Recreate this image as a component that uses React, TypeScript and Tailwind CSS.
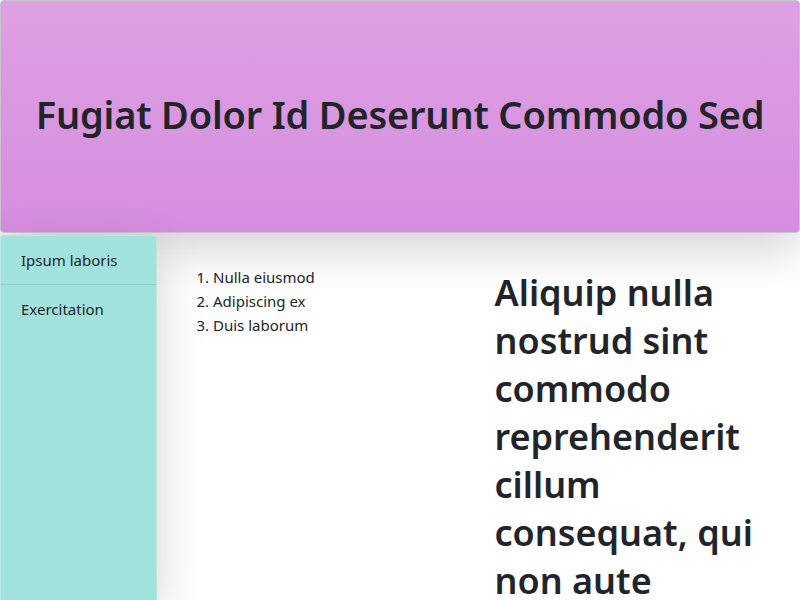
export default function App() {
  const links = ["Ipsum laboris", "Exercitation"];
  const items = ["Nulla eiusmod", "Adipiscing ex", "Duis laborum"];

  return (
    <div
      className="flex h-[600px] w-[800px] flex-col overflow-hidden bg-white text-[#212529]"
      style={{ fontFamily: '"Noto Sans", "Open Sans", sans-serif' }}
    >
      {/* Header */}
      <header className="relative z-20 flex h-[233px] shrink-0 items-center justify-center rounded border border-[#c9c3cc] bg-gradient-to-b from-[#dea0e3] to-[#d58edf] pb-1 shadow-[0_1rem_3rem_rgba(0,0,0,0.175)]">
        <h1 className="text-[38px] font-semibold leading-[1.2] tracking-[-0.2px]">
          Fugiat Dolor Id Deserunt Commodo Sed
        </h1>
      </header>

      <div className="mt-0.5 flex min-h-0 flex-1">
        {/* Sidebar */}
        <nav className="relative z-30 w-[157px] shrink-0 rounded-t border border-b-0 border-[#b9e6e0] bg-[#a1e3dc] shadow-[0_1rem_3rem_rgba(0,0,0,0.175)]">
          {links.map((l, i) => (
            <div
              key={l}
              className={`px-5 py-3 text-[15px] leading-6 ${i === 0 ? "border-b border-[#88cfc6]" : ""}`}
            >
              {l}
            </div>
          ))}
        </nav>

        {/* Main */}
        <main className="grid flex-1 grid-cols-2 gap-8 p-8 pt-[30px]">
          <ol className="list-decimal pl-6 text-[15px] leading-6">
            {items.map((t) => (
              <li key={t}>{t}</li>
            ))}
          </ol>
          <h2 className="pt-1 text-[36px] font-semibold leading-[48px]">
            Aliquip nulla nostrud sint commodo reprehenderit cillum consequat, qui non aute
          </h2>
        </main>
      </div>
    </div>
  );
}
